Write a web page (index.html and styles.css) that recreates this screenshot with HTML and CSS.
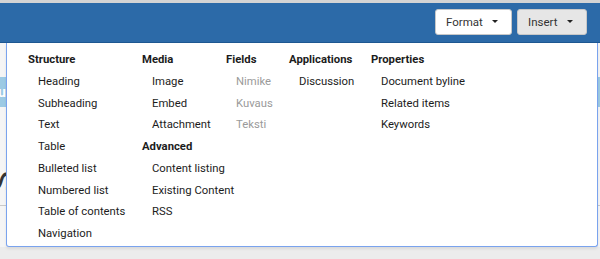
FILE: index.html
```html
<!DOCTYPE html>
<html>
<head>
<meta charset="utf-8">
<link rel="stylesheet" href="styles.css">
</head>
<body>
<div class="topstrip"></div>
<div class="toolbar">
  <button class="tbtn tbtn-format">Format <span class="caret"></span></button>
  <button class="tbtn tbtn-insert">Insert <span class="caret"></span></button>
</div>
<div class="page">
  <div class="behind">
    <div class="behind-bar"><span>u</span></div>
    <div class="behind-title">S</div>
    <div class="behind-rule"></div>
  </div>
  <div class="menu">
    <div class="col col-structure">
      <div class="head">Structure</div>
      <div class="item">Heading</div>
      <div class="item">Subheading</div>
      <div class="item">Text</div>
      <div class="item">Table</div>
      <div class="item">Bulleted list</div>
      <div class="item">Numbered list</div>
      <div class="item">Table of contents</div>
      <div class="item">Navigation</div>
    </div>
    <div class="col col-media">
      <div class="head">Media</div>
      <div class="item">Image</div>
      <div class="item">Embed</div>
      <div class="item">Attachment</div>
      <div class="head">Advanced</div>
      <div class="item">Content listing</div>
      <div class="item">Existing Content</div>
      <div class="item">RSS</div>
    </div>
    <div class="col col-fields">
      <div class="head">Fields</div>
      <div class="item disabled">Nimike</div>
      <div class="item disabled">Kuvaus</div>
      <div class="item disabled">Teksti</div>
    </div>
    <div class="col col-apps">
      <div class="head">Applications</div>
      <div class="item">Discussion</div>
    </div>
    <div class="col col-props">
      <div class="head">Properties</div>
      <div class="item">Document byline</div>
      <div class="item">Related items</div>
      <div class="item">Keywords</div>
    </div>
  </div>
</div>
</body>
</html>
```
FILE: styles.css
```css
html, body {
  margin: 0;
  padding: 0;
}
body {
  width: 600px;
  height: 259px;
  overflow: hidden;
  background: #ececec;
  font-family: Roboto, "Liberation Sans", sans-serif;
  color: #1c1c1c;
}
.topstrip {
  height: 3px;
  background: #d4d4d4;
}
.toolbar {
  height: 39px;
  background: #2c6aa8;
  border-bottom: 1px solid #1d5791;
  display: flex;
  justify-content: flex-end;
  align-items: center;
  gap: 5px;
  padding-right: 13px;
}
.tbtn {
  height: 26px;
  margin-top: -2px;
  border: 1px solid #c8c8c8;
  border-radius: 3px;
  font-family: Roboto, "Liberation Sans", sans-serif;
  font-size: 11.5px;
  color: #333;
  display: flex;
  align-items: center;
  padding: 0 13px 0 10px;
  box-sizing: border-box;
}
.tbtn-format {
  width: 77px;
  background: #ffffff;
  justify-content: space-between;
}
.tbtn-insert {
  width: 70px;
  background: #e6e6e6;
  justify-content: space-between;
}
.caret {
  width: 0;
  height: 0;
  border-left: 3px solid transparent;
  border-right: 3px solid transparent;
  border-top: 3px solid #222;
}
.page {
  position: relative;
  height: 216px;
}
.behind {
  background: #f5f5f5;
  height: 204px;
  overflow: hidden;
  padding-top: 34px;
  box-sizing: border-box;
}
.behind-bar {
  height: 30px;
  background: #9ccae4;
  color: #fff;
  font-size: 14px;
  font-weight: bold;
  line-height: 30px;
}
.behind-bar span {
  margin-left: -2px;
}
.behind-title {
  margin-top: 53px;
  font-size: 36px;
  line-height: 40px;
  height: 40px;
  color: #333;
  margin-left: -10px;
  transform: rotate(90deg);
  width: 20px;
}
.behind-rule {
  margin-top: 5px;
  height: 1px;
  background: #c9c9c9;
}
.menu {
  position: absolute;
  left: 6px;
  top: 0;
  background: #fff;
  border: 1px solid #7aa3ee;
  border-top: none;
  border-radius: 0 0 3px 3px;
  box-shadow: 0 2px 3px rgba(0,0,0,0.08);
  display: grid;
  grid-template-columns: 114px 84px 63px 82px 1fr;
  padding: 6px 0 0 21px;
  box-sizing: border-box;
  width: 592px;
  height: 204px;
  font-size: 11.3px;
}
.col {
  display: flex;
  flex-direction: column;
}
.head, .item {
  height: 21.75px;
  line-height: 21.75px;
  white-space: nowrap;
}
.head {
  font-weight: bold;
}
.item {
  padding-left: 10px;
}
.disabled {
  color: #9a9a9a;
}
```
